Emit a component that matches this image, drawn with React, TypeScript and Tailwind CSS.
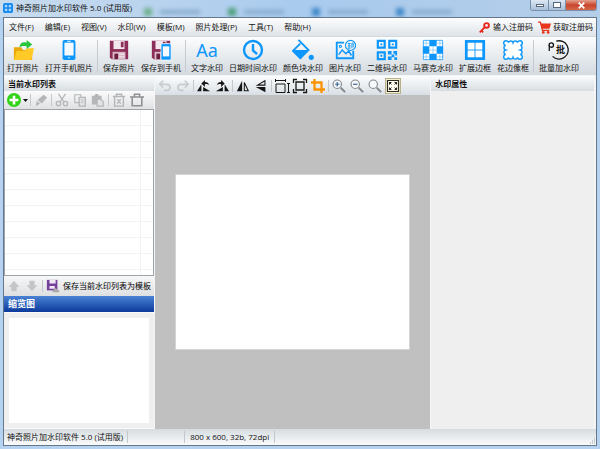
import React from 'react';

type IconProps = { children: React.ReactNode; className?: string; box?: string };

const Icon: React.FC<IconProps> = ({ children, className = 'size-5', box = '0 0 24 24' }) => (
  <svg viewBox={box} className={className} fill="none" stroke="currentColor" strokeWidth={2} aria-hidden="true">
    {children}
  </svg>
);

// ------------------------------
// MAIN TOOLBAR ICONS
// ------------------------------
const OpenIcon = () => (
  <Icon className="size-[22px]">
    <path d="M2 23V9h8l2 3h10v11z" fill="#e9a90c" stroke="none" />
    <path d="M2 23l3-10h9l2-3h8l-3 13z" fill="#ffc928" stroke="none" />
    <path d="M8 9c1-5 4-6 8-5V1l6 5-6 5V8c-4-1-6 0-8 1z" fill="#27c43c" stroke="none" />
  </Icon>
);

const PhoneIcon = () => (
  <Icon className="size-[22px]">
    <rect x="5" y="1" width="14" height="22" rx="2" fill="#0d96fb" stroke="none" />
    <path d="M7 4h10v14H7z" fill="#f4faff" stroke="none" />
    <path d="M10 2.5h4M11 20.5h2" stroke="#fff" strokeWidth={1} />
  </Icon>
);

const FloppyBody = () => (
  <g stroke="none">
    <path d="M2 2h20v20H4l-2-2z" fill="#8e2e58" />
    <path d="M6 2h12v9H6z" fill="#f1e7ec" />
    <path d="M14 3h3v6h-3z" fill="#8e2e58" />
    <path d="M5 14h14v8H5z" fill="#d9b8c6" />
    <path d="M7 16h4v6H7z" fill="#6d1c40" />
    <path d="M12 16h6v1h-6zM12 19h6v1h-6z" fill="#fff" />
  </g>
);

const SaveIcon = () => (
  <Icon className="size-[22px]">
    <FloppyBody />
  </Icon>
);

const SavePhoneIcon = () => (
  <Icon className="size-[22px]">
    <FloppyBody />
    <rect x="12" y="5" width="11" height="18" rx="1.5" fill="#0d96fb" stroke="#fff" strokeWidth={0.8} />
    <path d="M14 8h7v11h-7z" fill="#f4faff" stroke="none" />
  </Icon>
);

const TextMark = () => (
  <span className="flex h-[22px] items-center font-['Noto_Sans'] text-[18px] leading-[22px] text-[#0d96fb]">Aa</span>
);

const ClockIcon = () => (
  <Icon className="size-[22px]">
    <circle cx="12" cy="12" r="9.8" strokeWidth={2.6} />
    <path d="M12 5.5v7l4.5 4" strokeWidth={2.6} />
  </Icon>
);

const FillIcon = () => (
  <Icon className="size-[22px]">
    <path d="M7 1l11 11-9 9L1 13l8-8" />
    <path d="M1 12h18l-10 10z" fill="currentColor" stroke="none" />
    <circle cx="21" cy="20" r="2.8" fill="currentColor" stroke="none" />
  </Icon>
);

const PictureIcon = () => (
  <Icon className="size-[22px]">
    <path d="M11 4H3v17h18v-8" />
    <path d="M5 17l4-5 4 4 3-3 3 5" strokeWidth={1.6} />
    <circle cx="7" cy="8" r="1.2" strokeWidth={1.2} />
    <circle cx="18" cy="7" r="5.5" strokeWidth={1.2} />
    <path d="M15 5h3M15 7.5h3M15 10h3M16.5 4v6M19.5 10V4.5H21V9" strokeWidth={1} />
  </Icon>
);

const QrIcon = () => (
  <Icon className="size-[22px]">
    <path d="M2 2h7.5v7.5H2zM14.5 2H22v7.5h-7.5zM2 14.5h7.5V22H2z" strokeWidth={2.4} />
    <path
      d="M4.8 4.8h2v2h-2zM17.3 4.8h2v2h-2zM4.8 17.3h2v2h-2zM13 13h4v4h-4zM19 13h4v5h-2v-2h-2zM13 19h4v4h-4zM17 17h3v3h-3zM20 20h3v3h-3z"
      fill="currentColor"
      stroke="none"
    />
  </Icon>
);

const MosaicIcon = () => (
  <Icon className="size-[22px]">
    <path d="M1.5 1.5h21v21h-21z" fill="#fff" strokeWidth={0.8} />
    <path d="M8 1h8v7H8zM1 8h7v8H1zM16 8h7v8h-7zM8 16h8v7H8z" fill="currentColor" stroke="none" />
    <path d="M4.5 1v7M1 4.5h7M19.5 1v7M16 4.5h7M12 8v8M8 12h8M4.5 16v7M1 19.5h7M19.5 16v7M16 19.5h7" strokeWidth={0.4} />
  </Icon>
);

const FrameIcon = () => (
  <Icon className="size-[22px]">
    <path d="M2.5 2.5h19v19h-19z" fill="#fff" strokeWidth={3} />
    <path d="M12 3v18M3 12h18" strokeWidth={1} />
  </Icon>
);

const LaceIcon = () => (
  <Icon className="size-[22px]">
    <path
      d="M7 4a2.6 2.6 0 0 1 5 0a2.6 2.6 0 0 1 5 0a2.6 2.6 0 1 1 3 3a2.6 2.6 0 0 1 0 5a2.6 2.6 0 0 1 0 5a2.6 2.6 0 1 1-3 3a2.6 2.6 0 0 1-5 0a2.6 2.6 0 0 1-5 0a2.6 2.6 0 1 1-3-3a2.6 2.6 0 0 1 0-5a2.6 2.6 0 0 1 0-5a2.6 2.6 0 1 1 3-3z"
      fill="#fff"
      strokeWidth={1.6}
    />
  </Icon>
);

const BatchIcon = () => (
  <span className="relative flex size-[22px] items-center justify-center pl-[3px] text-[#151515]">
    <Icon className="absolute inset-0 size-[22px]">
      <path d="M9 2.4A10 10 0 1 1 5 19" strokeWidth={1.4} />
      <circle cx="3.6" cy="6.6" r="2.4" strokeWidth={1.4} />
      <path d="M1.4 6.600V13" strokeWidth={1.400} />
    </Icon>
    <b className="text-[9px] leading-[10px]">批</b>
  </span>
);

// ------------------------------
// SMALL ICONS
// ------------------------------
const small = 'size-[14px]';

const UndoIcon = () => (
  <Icon className={small} box="0 0 16 16">
    <path d="M6 2L2 6l4 4M2 6h8c5 0 5 7 0 7H7" />
  </Icon>
);
const RedoIcon = () => (
  <Icon className={small} box="0 0 16 16">
    <path d="M10 2l4 4-4 4M14 6H6c-5 0-5 7 0 7h3" />
  </Icon>
);
const RotateLeftIcon = () => (
  <Icon className={small} box="0 0 16 16">
    <path d="M0 14l5-8v8zM7 9l8 5H7z" fill="currentColor" stroke="none" />
    <path d="M5 5l4-4v2.5c3 0 4 1 5 3.500-2-1-3-1.500-5-1V9z" fill="currentColor" stroke="none" />
  </Icon>
);
const RotateRightIcon = () => (
  <Icon className={small} box="0 0 16 16">
    <path d="M16 14l-5-8v8zM9 9l-8 5h8z" fill="currentColor" stroke="none" />
    <path d="M11 5L7 1v2.500c-3 0-4 1-5 3.500 2-1 3-1.500 5-1V9z" fill="currentColor" stroke="none" />
  </Icon>
);
const FlipHIcon = () => (
  <Icon className={small} box="0 0 16 16">
    <path d="M7 2v12H1z" fill="currentColor" stroke="none" />
    <path d="M9.5 4v9.5H14z" strokeWidth={1.2} />
  </Icon>
);
const FlipVIcon = () => (
  <Icon className={small} box="0 0 16 16">
    <path d="M13 9v6L2 9z" fill="currentColor" stroke="none" />
    <path d="M12.5 2v5H4z" strokeWidth={1.2} />
  </Icon>
);
const ResizeIcon = () => (
  <Icon className="size-4" box="0 0 16 16">
    <path d="M2 6h9v8.500H2zM1 2.500h11M1.500 1v3M11.500 1v3M14.500 5v10M13 5.500h3M13 14.500h3" strokeWidth={1} />
  </Icon>
);
const CanvasIcon = () => (
  <Icon className="size-4" box="0 0 16 16">
    <path d="M4 4h8v8H4zM1.500 5V1.500H5M11 1.500h3.500V5M14.500 11v3.500H11M5 14.500H1.500V11" strokeWidth={1.3} />
  </Icon>
);
const CropIcon = () => (
  <Icon className={small} box="0 0 16 16">
    <path d="M4 0v12h12M0 4h12v12" strokeWidth={2.6} />
  </Icon>
);
const Lens: React.FC<{ mark?: string }> = ({ mark }) => (
  <Icon className={small} box="0 0 16 16">
    <circle cx="6" cy="6" r="4.8" strokeWidth={1.3} fill="#f7f9fb" />
    <path d="M10 10l5 5" strokeWidth={2.2} />
    {mark && <path d={mark} stroke="#3e6597" strokeWidth={1.4} />}
  </Icon>
);
const FitIcon = () => (
  <Icon className={small} box="0 0 14 14">
    <path d="M1.500 1.500h11v11h-11z" fill="#fffef0" strokeWidth={1.2} />
    <path d="M3 3h3L3 6zM11 3H8l3 3zM3 11h3L3 8zM11 11H8l3-3z" fill="currentColor" stroke="none" />
    <path d="M3.500 3.500l2 2M10.500 3.500l-2 2M3.500 10.500l2-2M10.500 10.500l-2-2" strokeWidth={1} />
  </Icon>
);
const AddIcon = () => (
  <Icon className="size-[14px]" box="0 0 16 16">
    <circle cx="8" cy="8" r="8" fill="#32d318" stroke="none" />
    <path d="M8 3v10M3 8h10" stroke="#fff" strokeWidth={3} />
  </Icon>
);
const BrushIcon = () => (
  <Icon className={small} box="0 0 16 16">
    <path d="M11 2l4 3-6 7-5-4zM3 9l4 3-5 3z" fill="currentColor" stroke="none" />
  </Icon>
);
const CutIcon = () => (
  <Icon className={small} box="0 0 16 16">
    <path d="M4 1l6 9M12 1L6 10" strokeWidth={1.5} />
    <circle cx="4" cy="12" r="2.5" strokeWidth={1.5} />
    <circle cx="12" cy="12" r="2.5" strokeWidth={1.5} />
  </Icon>
);
const CopyIcon = () => (
  <Icon className={small} box="0 0 16 16">
    <path d="M2 2h7v9H2z" strokeWidth={1.3} />
    <path d="M7 5h7v10H7z" fill="#e4e4e4" strokeWidth={1.5} />
    <path d="M9 8h3M9 10.5h3" strokeWidth={1} />
  </Icon>
);
const PasteIcon = () => (
  <Icon className={small} box="0 0 16 16">
    <path d="M1 3h3l1-2h3l1 2h3v10H1z" fill="currentColor" stroke="none" />
    <path d="M7 7h4l3 3v5H7z" fill="#e4e4e4" strokeWidth={1.3} />
  </Icon>
);
const DeleteIcon = () => (
  <Icon className={small} box="0 0 16 16">
    <path d="M1 4h14M5 4V1.500h6V4M3 4v11h10V4M6 7l4 5M10 7l-4 5" strokeWidth={1.6} />
  </Icon>
);
const TrashIcon = () => (
  <Icon className={small} box="0 0 16 16">
    <path d="M0 4.500h16M5 4V1.500h6V4M2.500 5v9.500h11V5" strokeWidth={1.8} />
  </Icon>
);
const ArrowUp = () => (
  <Icon className={small} box="0 0 16 16">
    <path d="M8 2l6 7h-3v5H5V9H2z" fill="currentColor" stroke="none" />
  </Icon>
);
const ArrowDown = () => (
  <Icon className={small} box="0 0 16 16">
    <path d="M8 14l6-7h-3V2H5v5H2z" fill="currentColor" stroke="none" />
  </Icon>
);
const SaveTemplateIcon = () => (
  <Icon className={small} box="0 0 16 16">
    <path d="M1 1h12v12H1z" fill="#74409b" stroke="none" />
    <path d="M4 1h7v4H4zM4 8h6v3H4z" fill="#f0e8f6" stroke="none" />
    <path d="M7 15l3-5 5 3v2z" fill="#a9a9a9" stroke="none" />
  </Icon>
);
const KeyIcon = () => (
  <Icon className="size-[11px] text-[#e8261c]" box="0 0 16 16">
    <circle cx="11" cy="5" r="3.4" strokeWidth={2.8} />
    <path d="M8.500 7.500L1 15M3 12l3 3" strokeWidth={2.6} />
  </Icon>
);
const CartIcon = () => (
  <Icon className="size-[13px] text-[#e8361c]" box="0 0 16 16">
    <path d="M0 1.500h3l2.500 10H14" strokeWidth={1.6} />
    <path d="M3 3h13l-2 6.500H5z" fill="currentColor" stroke="none" />
    <circle cx="6.5" cy="14" r="1.7" fill="currentColor" stroke="none" />
    <circle cx="12.5" cy="14" r="1.7" fill="currentColor" stroke="none" />
  </Icon>
);

// ------------------------------
// DATA
// ------------------------------
const APP_TITLE = '神奇照片加水印软件 5.0 (试用版)';

const MENUS = ['文件(F)', '编辑(E)', '视图(V)', '水印(W)', '模板(M)', '照片处理(P)', '工具(T)', '帮助(H)'];

// accent colours of the browser tabs that shine through the glass title bar
const GLASS_TABS = ['bg-[#6fb08d]', 'bg-[#4fa07c]', 'bg-[#4088c8]', 'bg-[#4088c8]'];

type Tool = { label: string; icon: React.ReactNode };

const TOOL_GROUPS: Tool[][] = [
  [
    { label: '打开照片', icon: <OpenIcon /> },
    { label: '打开手机照片', icon: <PhoneIcon /> },
  ],
  [
    { label: '保存照片', icon: <SaveIcon /> },
    { label: '保存到手机', icon: <SavePhoneIcon /> },
  ],
  [
    { label: '文字水印', icon: <TextMark /> },
    { label: '日期时间水印', icon: <ClockIcon /> },
    { label: '颜色块水印', icon: <FillIcon /> },
    { label: '图片水印', icon: <PictureIcon /> },
    { label: '二维码水印', icon: <QrIcon /> },
    { label: '马赛克水印', icon: <MosaicIcon /> },
    { label: '扩展边框', icon: <FrameIcon /> },
    { label: '花边像框', icon: <LaceIcon /> },
  ],
  [{ label: '批量加水印', icon: <BatchIcon /> }],
];

// ------------------------------
// SHARED PIECES
// ------------------------------
const Separator = () => <span className="h-3 w-px shrink-0 bg-[#c3c8cc]" />;

const IconButton: React.FC<{ label: string; children: React.ReactNode; className?: string }> = ({
  label,
  children,
  className = '',
}) => (
  <button type="button" aria-label={label} className={`flex size-4 shrink-0 items-center justify-center ${className}`}>
    {children}
  </button>
);

const PanelHeader: React.FC<{ children: React.ReactNode }> = ({ children }) => (
  <h2 className="h-[15px] shrink-0 bg-linear-to-b from-[#fbfcfd] to-[#d6dde2] px-1 font-bold leading-[15px]">
    {children}
  </h2>
);

// ------------------------------
// TITLE BAR
// ------------------------------
const TitleBar = () => (
  <header className="relative flex h-[17px] shrink-0 items-start overflow-hidden bg-linear-to-r from-[#c9dcee] via-[#a9cbee] to-[#b4cde8]">
    <div className="absolute inset-0 flex items-end gap-4 pb-px pl-36 blur-[2px]" aria-hidden="true">
      {GLASS_TABS.map((tint, index) => (
        <span key={index} className="flex w-[68px] items-center gap-2">
          <span className={`size-2 ${tint}`} />
          <span className="h-1 w-10 bg-[#86a9cc]" />
        </span>
      ))}
    </div>
    <h1 className="relative flex h-4 flex-1 items-center gap-[3px] pl-[3px]">
      <Icon className="size-[10px]" box="0 0 16 16">
        <rect width="16" height="16" rx="3" fill="#1b8df0" stroke="none" />
        <path d="M4 4h2v2H4zM10 4h2v2h-2zM4 10h2v2H4zM10 10h2v2h-2z" stroke="#d8efff" strokeWidth={1.5} />
      </Icon>
      {APP_TITLE}
    </h1>
    <div className="relative mr-[3px] flex h-[11px] overflow-hidden rounded-b-[3px] border border-t-0 border-[#7890aa]">
      <button type="button" aria-label="最小化" className="flex w-[18px] items-center justify-center border-r border-[#7890aa] bg-linear-to-b from-[#dce8f4] to-[#a9bfd7]">
        <span className="h-[3px] w-2 border border-[#56677a] bg-white" />
      </button>
      <button type="button" aria-label="最大化" className="flex w-[17px] items-center justify-center border-r border-[#7890aa] bg-linear-to-b from-[#dce8f4] to-[#a9bfd7]">
        <span className="h-[6px] w-2 border border-[#56677a] bg-white" />
      </button>
      <button type="button" aria-label="关闭" className="flex w-[30px] items-center justify-center bg-linear-to-b from-[#e2a08e] via-[#c8452b] to-[#d5674a] text-white">
        <Icon className="size-[7px]" box="0 0 10 10">
          <path d="M1 1l8 8M9 1L1 9" strokeWidth={2.5} />
        </Icon>
      </button>
    </div>
  </header>
);

const MenuBar = () => (
  <nav className="flex h-[18px] shrink-0 items-center justify-between bg-linear-to-b from-[#fdfdfe] to-[#dfe4e8] pl-[5px] pr-[3px]">
    <div className="flex gap-[11px]">
      {MENUS.map((menu) => (
        <button type="button" key={menu}>
          {menu}
        </button>
      ))}
    </div>
    <div className="flex gap-[5px]">
      <a href="#enter-code" className="flex items-center gap-[3px]">
        <KeyIcon />
        输入注册码
      </a>
      <a href="#get-code" className="flex items-center gap-[2px]">
        <CartIcon />
        获取注册码
      </a>
    </div>
  </nav>
);

const MainToolbar = () => (
  <div className="flex h-[39px] shrink-0 items-center border-t border-[#d2d8dd] bg-linear-to-b from-[#fcfdfd] to-[#d3dae0]">
    {TOOL_GROUPS.map((group, index) => (
      <React.Fragment key={group[0].label}>
        {index > 0 && <span className="ml-px mr-[2px] h-8 w-px bg-[#c5cbd0]" />}
        {group.map((tool) => (
          <button type="button" key={tool.label} className="flex shrink-0 flex-col items-center gap-px whitespace-nowrap px-[3px]">
            <span className="text-[#0d96fb]">{tool.icon}</span>
            <span>{tool.label}</span>
          </button>
        ))}
      </React.Fragment>
    ))}
  </div>
);

// ------------------------------
// LEFT COLUMN
// ------------------------------
const WatermarkList = () => (
  <section className="flex flex-1 flex-col">
    <PanelHeader>当前水印列表</PanelHeader>
    <div className="flex h-[18px] shrink-0 items-center gap-[2px] bg-linear-to-b from-[#fbfbfb] to-[#dfe1e3] pl-[2px] text-[#b4b6b8]">
      <button type="button" aria-label="添加水印" className="flex h-4 items-center gap-px pl-px">
        <AddIcon />
        <Icon className="h-[3px] w-[6px]" box="0 0 6 3">
          <path d="M1 0h5L3.500 3z" fill="#111" stroke="none" />
        </Icon>
      </button>
      <Separator />
      <IconButton label="编辑水印"><BrushIcon /></IconButton>
      <Separator />
      <IconButton label="剪切"><CutIcon /></IconButton>
      <IconButton label="复制"><CopyIcon /></IconButton>
      <IconButton label="粘贴"><PasteIcon /></IconButton>
      <Separator />
      <IconButton label="删除"><DeleteIcon /></IconButton>
      <IconButton label="清空" className="text-[#8e9092]"><TrashIcon /></IconButton>
    </div>
    <div className="flex flex-1 border border-[#9da3a8] bg-white">
      <div className="flex-1 border-r border-[#f3f3f3] bg-[repeating-linear-gradient(to_bottom,transparent_0_15px,#f3f3f3_15px_16px)]" />
      <div className="w-3 bg-[repeating-linear-gradient(to_bottom,transparent_0_15px,#f3f3f3_15px_16px)]" />
    </div>
    <div className="flex h-5 shrink-0 items-center gap-[2px] bg-linear-to-b from-[#f7f8f8] to-[#dddfe1] pl-[2px] text-[#c3c5c7]">
      <IconButton label="上移"><ArrowUp /></IconButton>
      <IconButton label="下移"><ArrowDown /></IconButton>
      <Separator />
      <button type="button" className="flex items-center gap-[3px] whitespace-nowrap pl-px text-black">
        <SaveTemplateIcon />
        保存当前水印列表为模板
      </button>
    </div>
  </section>
);

const Thumbnail = () => (
  <section className="flex shrink-0 flex-col">
    <h2 className="h-4 bg-linear-to-b from-[#4a82d4] to-[#0c3a9b] px-1 text-[9px] font-bold leading-4 text-white">缩览图</h2>
    <div className="h-[117px] border-y border-[#fafafa] bg-[#efefef] p-[5px]">
      <div className="h-full bg-white" />
    </div>
  </section>
);

// ------------------------------
// CENTRE
// ------------------------------
const Workspace = () => (
  <main className="flex flex-1 flex-col bg-[#c0c0c0]">
    <div className="flex h-[19px] shrink-0 items-center gap-[2px] bg-linear-to-b from-[#fcfdfd] to-[#d8dfe4] pl-[2px] text-[#161616]">
      <IconButton label="撤销" className="text-[#c8ccd0]"><UndoIcon /></IconButton>
      <IconButton label="重做" className="text-[#c8ccd0]"><RedoIcon /></IconButton>
      <Separator />
      <IconButton label="向左旋转"><RotateLeftIcon /></IconButton>
      <IconButton label="向右旋转"><RotateRightIcon /></IconButton>
      <Separator />
      <IconButton label="水平翻转"><FlipHIcon /></IconButton>
      <IconButton label="垂直翻转"><FlipVIcon /></IconButton>
      <Separator />
      <IconButton label="调整大小"><ResizeIcon /></IconButton>
      <IconButton label="画布大小"><CanvasIcon /></IconButton>
      <IconButton label="裁剪" className="text-[#fb9404]"><CropIcon /></IconButton>
      <Separator />
      <IconButton label="放大" className="text-[#83888e]"><Lens mark="M3.500 6h5M6 3.500v5" /></IconButton>
      <IconButton label="缩小" className="text-[#83888e]"><Lens mark="M3.500 6h5" /></IconButton>
      <IconButton label="实际大小" className="text-[#83888e]"><Lens /></IconButton>
      <IconButton label="适合窗口" className="border border-[#b9b08c] bg-[#f6f0d2] text-[#2b2b20]"><FitIcon /></IconButton>
    </div>
    <div className="flex flex-1 items-center justify-center px-5">
      <div className="aspect-4/3 w-full border border-[#d4d4d4] bg-white" />
    </div>
  </main>
);

const StatusBar = () => (
  <footer className="flex h-4 shrink-0 items-center bg-linear-to-b from-[#d5dce1] to-[#fafbfb] pl-[3px]">
    <span className="whitespace-nowrap pr-1">{APP_TITLE}</span>
    <Separator />
    <span className="w-14" />
    <Separator />
    <span className="whitespace-nowrap px-[5px]">800 x 600, 32b, 72dpi</span>
    <Separator />
    <span className="grid flex-1 place-content-end self-end">
      <Icon className="size-[7px]" box="0 0 7 7">
        <path d="M5 1h1M5 3h1M3 3h1M5 5h1M3 5h1M1 5h1" stroke="#9aa2a9" strokeWidth={1} />
      </Icon>
    </span>
  </footer>
);

export default function App() {
  return (
    <div className="flex min-h-screen flex-col bg-[#b5d2f0] pb-[3px] font-['Open_Sans','Noto_Sans_CJK_SC',sans-serif] text-[8px] leading-[12px] text-[#111]">
      <TitleBar />
      <div className="mx-[3px] flex flex-1 flex-col border border-[#65788b] bg-[#f4f5f6]">
        <MenuBar />
        <MainToolbar />
        <div className="flex flex-1 gap-px pt-px">
          <aside className="flex w-[150px] shrink-0 flex-col">
            <WatermarkList />
            <Thumbnail />
          </aside>
          <Workspace />
          <aside className="mr-[2px] flex w-[27.5%] shrink-0 flex-col bg-[#efefef]">
            <PanelHeader>水印属性</PanelHeader>
          </aside>
        </div>
        <StatusBar />
      </div>
    </div>
  );
}
